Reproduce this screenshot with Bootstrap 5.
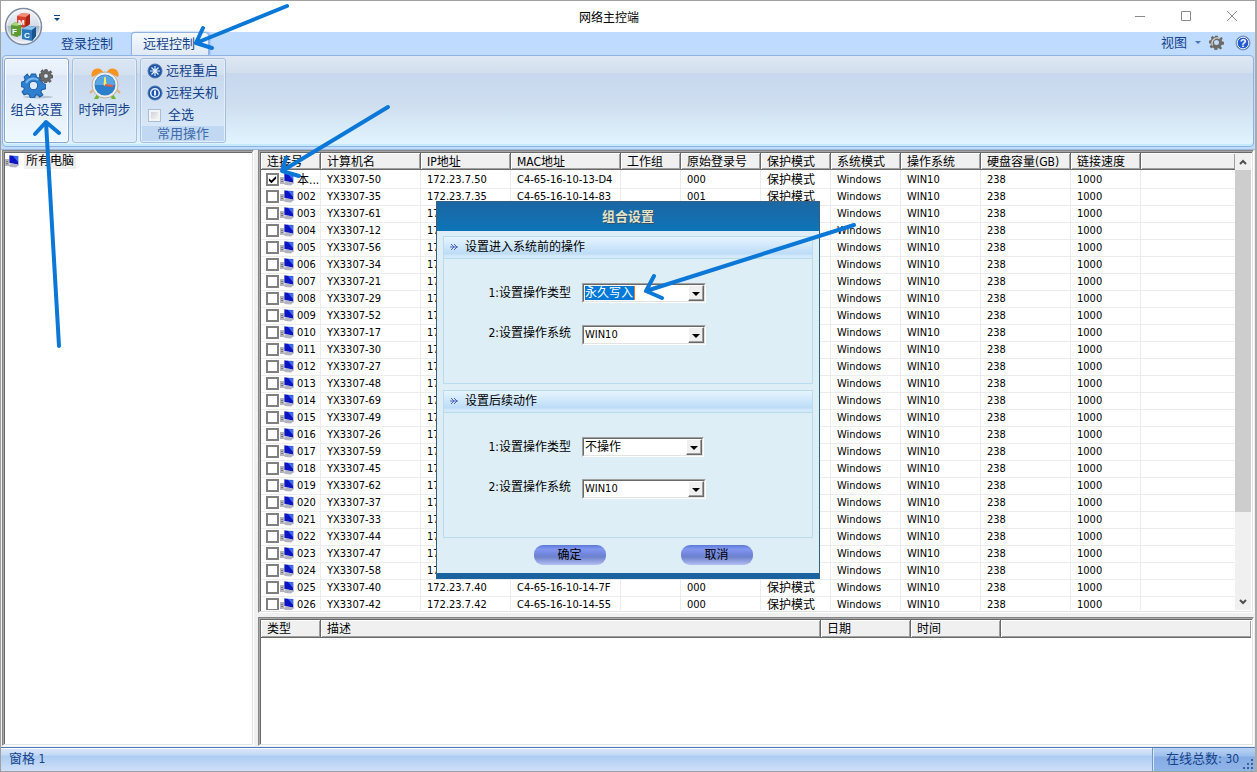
<!DOCTYPE html>
<html lang="zh-CN">
<head>
<meta charset="utf-8">
<meta name="viewport" content="width=device-width, initial-scale=1">
<title>网络主控端</title>
<link href="https://cdn.jsdelivr.net/npm/bootstrap@5.3.0/dist/css/bootstrap.min.css" rel="stylesheet">
<style>
  :root { --ink: #15428b; --face: #f0f0f0; }
  body { font: 12px/16px "DejaVu Sans Condensed", "Noto Sans CJK SC", sans-serif; color: #000; background: #fff; }
  button, input, select { font: inherit; }
  .win { border: 1px solid #a0a0a0; border-right: 2px solid #aaa; }
  .titlebar { height: 31px; }
  .titlebar h1 { font-size: 12px; line-height: 16px; padding-top: 2px; padding-right: 38px; }
  .winctl { gap: 34px; padding-right: 17px; padding-bottom: 1px; }
  .plain { background: none; border: 0; padding: 0; color: inherit; display: flex; align-items: center; }
  .orb { left: 3px; top: 6px; z-index: 3; }
  .qat { left: 52px; top: 13px; }

  .tabs-row { background: #bfdbff; height: 23px; padding-left: 52px; font-size: 13px; color: var(--ink); }
  .tabs-row a { color: var(--ink); text-decoration: none; height: 22px; line-height: 21px; padding: 0 9px 0 8px; }
  .tabs-row a.active { margin-left: 9px; padding: 0 13px 0 11px; height: 23px; background: linear-gradient(#f4f9ff, #dfe9f5); border: 1px solid #8db2e3; border-bottom: 0; border-radius: 4px 4px 0 0; box-shadow: 1px 0 2px #7ea6dc; }
  .tools { padding-right: 4px; gap: 7px; padding-bottom: 2px; }

  .ribbon-bg { background: #bfdbff; padding: 0 1px 2px; }
  .ribbon { height: 92px; border: 1px solid #8db2e3; border-radius: 4px; padding: 2px 1px; gap: 3px; font-size: 13px; color: var(--ink);
    background: linear-gradient(#dfe8f4 0, #d2deec 17px, #c7d7ed 17px, #cfdff0 50px, #e1f4fe 88px); box-shadow: inset 0 -2px 1px #c2eafb; }
  .rgroup { border: 1px solid #a5bfdf; border-radius: 3px; box-shadow: inset 0 0 0 1px #e3eefa; background: linear-gradient(#dbe6f4 0, #d3e0f0 16px, #c8d9ee 16px, #dcecfa 100%); color: var(--ink); padding: 0; height: 85px; }
  .rbig { width: 65px; padding-top: 9px; line-height: 20px; display: flex; flex-direction: column; align-items: center; gap: 0; }
  .rbig.hot { background: linear-gradient(#edf4fd 0, #e6eefa 16px, #dbe7f7 16px, #eef8ff 100%); border-color: #86a7d4; box-shadow: inset 0 0 0 1px #fff; }
  .rlist { width: 86px; padding: 1px; line-height: 20px; }
  .rlist button, .rlist label { height: 22px; padding-left: 5px; gap: 3px; display: flex; align-items: center; }
  .rlist .cap { background: #c0d8f1; color: #3e6aaa; height: 15px; line-height: 15px; text-align: center; }
  .tick-all { appearance: none; width: 13px; height: 13px; margin: 0 4px 0 1px; border: 1px solid #a9bdd8; background: linear-gradient(135deg, #c4c7cc, #fff); box-shadow: inset 0 0 0 2px #f4f4f4; }

  .work { background: var(--face); padding: 0 1px 1px; gap: 4px; border-top: 1px solid #9db8dd; }
  .sunk { background: #fff; border: 1px solid #868686; border-right-color: #fff; border-bottom-color: #fff; padding: 2px; overflow: hidden;
    box-shadow: inset 1px 1px #a6a6a6, inset -1px -1px #e3e3e3, inset 2px 2px #696969; }
  .tree { flex: 0 0 252px; }
  .tree a { color: #000; text-decoration: none; gap: 4px; }
  .tree a span { background: var(--face); padding: 0 2px; }
  .stack { gap: 4px; }
  .log { height: 129px; }

  .grid { table-layout: fixed; width: 100%; border-collapse: separate; border-spacing: 0; }
  .grid th { height: 17px; line-height: 14px; padding: 2px 0 0 6px; font-weight: 400; white-space: nowrap; overflow: hidden; background: var(--face);
    border-right: 1px solid #696969; border-bottom: 1px solid #696969; box-shadow: inset 1px 1px #fff, inset -1px -1px #a0a0a0; }
  .grid th:last-child { border-right: 0; }
  .log .grid th { height: 18px; line-height: 15px; }
  .grid td { height: 17px; line-height: 16px; padding: 0 0 0 5px; font-size: 11px; white-space: nowrap; overflow: hidden; border-right: 1px solid #ececec; border-bottom: 1px solid #ececec; }
  .grid td:nth-child(n+2) { padding-left: 6px; }
  .grid td:last-child { border-right: 0; }
  .grid tbody tr:first-child td { padding-top: 2px; }
  .grid .zh { font-size: 12px; }
  .grid label { display: flex; align-items: center; height: 16px; padding-bottom: 1px; }
  .grid label svg { margin: 0 2px 0 1px; flex: none; }
  .tick { appearance: none; flex: none; width: 13px; height: 13px; margin: 0; border: 2px solid #808080; background: #fff; }
  .tick:checked::before { content: ""; display: block; width: 9px; height: 9px; background: #000; clip-path: polygon(10% 35%, 38% 62%, 90% 12%, 90% 42%, 38% 92%, 10% 65%); }
  .vbar { flex: 0 0 16px; background: var(--face); }
  .vbar i { display: block; background: #cdcdcd; height: 342px; width: 16px; }
  .vbar svg { margin: 4px; flex: none; }

  .statusbar { height: 24px; border-top: 1px solid #4f7cb8; box-shadow: inset 0 1px #fff; background: linear-gradient(#dbe8fa 0, #c3d9f6 7px, #acccf3 8px, #cfe0f8 100%); color: var(--ink); line-height: 21px; }
  .statusbar .zh { font-size: 13px; }
  .statusbar .pane { padding-left: 8px; }
  .statusbar .total { width: 103px; padding: 0 16px 0 13px; border-left: 1px solid #6f97cf; background: linear-gradient(#b9d2f3 0, #9dbfec 8px, #86ade4 9px, #8fb4e8 100%); box-shadow: inset 1px 0 #dbe8fa; }
  .grip { right: 1px; bottom: 1px; }

  .veil { padding-top: 7px; z-index: 5; }
  .dlg { width: 384px; background: #deeef7; border: 1px solid #39617f; border-bottom: 6px solid #1a639e; }
  .dlg h2 { height: 29px; line-height: 30px; margin: 0 0 5px; font-size: 13px; font-weight: 700; text-align: center; color: #e3e3c9; text-shadow: 1px 1px #33506a; background: linear-gradient(#1c67a3, #0d74b8); }
  .dlg fieldset { margin: 0 6px 6px; height: 148px; border: 1px solid #b9dced; }
  .dlg .leg { height: 22px; padding-left: 6px; gap: 7px; background: linear-gradient(#e6f5fe, #bddcf8 80%, #d4eafa 90%); border-bottom: 1px solid #b9dced; margin-bottom: 24px; }
  .frow { padding-left: 36px; gap: 11px; margin-bottom: 22px; }
  .frow label { width: 91px; text-align: right; }
  .combo { display: block; position: relative; width: 124px; height: 20px; border: 1px solid #a0a0a0; border-right-color: #fff; border-bottom-color: #fff; }
  .combo.slim { width: 122px; }
  .combo select { appearance: none; width: 100%; height: 18px; line-height: 15px; padding: 1px 18px 0 1px; border: 1px solid #696969; border-right-color: #e3e3e3; border-bottom-color: #e3e3e3; border-radius: 0; background: #fff; display: block; color: #000; outline: 0; }
  .combo .lat { font-size: 11px; padding-top: 0; }
  .combo select.picked { color: #fff; background: linear-gradient(#e8762c, #e8762c) 50px 1px / 1px 14px no-repeat, linear-gradient(#0078d7, #0078d7) 1px 1px / 49px 14px no-repeat, #fff; }
  .combo::after { content: ""; position: absolute; right: 1px; top: 1px; width: 16px; height: 16px; background: var(--face); border: 1px solid #fff; border-right-color: #696969; border-bottom-color: #696969; box-shadow: inset -1px -1px #a0a0a0; pointer-events: none; }
  .combo::before { content: ""; position: absolute; z-index: 1; right: 5px; top: 8px; border: 4px solid transparent; border-top-color: #000; border-bottom: 0; pointer-events: none; }
  .dlg-foot { gap: 75px; padding: 1px 0 8px 30px; }
  .pill { width: 72px; height: 20px; padding: 0; border: 0; border-radius: 9px; line-height: 20px; background: linear-gradient(#5a78d8 0, #8297ee 4px, #7286dc 9px, #6c82cc 12px, #b5bff2 100%); }
  .pill:hover { filter: brightness(1.05); }
  .notes { z-index: 9; pointer-events: none; fill: none; stroke: #0b78d8; stroke-width: 4; stroke-linecap: round; stroke-linejoin: round; }
</style>
</head>
<body>
<svg class="d-none" aria-hidden="true">
  <symbol id="pc" viewBox="0 0 15 13">
    <path d="M0 4h4v7H0z" fill="#b4b4b8"/><path d="M1 6h2v1H1zM1 8h2v1H1z" fill="#77777c"/>
    <path d="M4 0l10 1v9.500L4 8.500z" fill="#b9bfdc"/><path d="M4.500 .5l8.500 1V9.500L4.500 7.800z" fill="#0c14c4"/>
    <path d="M8 1l5 .6V7z" fill="#3f6cf0"/><path d="M3 10l4-1.500 7 1.500-3 2.500-6-.5z" fill="#b4b4c0"/>
  </symbol>
  <symbol id="cog" viewBox="-12 -12 24 24">
    <path fill-rule="evenodd" d="M-2-11H2L3-8 5-7 8-9 10-6 8-4 9-2 12-1V3L8 4 7 6 9 9 6 11 4 9 2 9 1 12H-3L-4 9-6 8-9 9-11 6-9 4-9 2-12 1V-3L-9-4-8-6-9-8-6-11-4-8-3-9zM0-4a4 4 0 1 0 0 8 4 4 0 0 0 0-8z"/>
  </symbol>
</svg>

<div class="win vh-100 d-flex flex-column position-relative overflow-hidden">
  <header class="titlebar position-relative d-flex align-items-center justify-content-center flex-shrink-0">
    <button class="plain orb position-absolute" aria-label="菜单">
      <svg width="39" height="39" viewBox="0 0 39 39">
        <defs><linearGradient id="gl" x2="0" y2="1"><stop offset="0" stop-color="#f5f7fb"/><stop offset=".48" stop-color="#d5dbe6"/><stop offset=".5" stop-color="#a9b4c8"/><stop offset="1" stop-color="#f2f6fc"/></linearGradient></defs>
        <circle cx="19.500" cy="19.500" r="18" fill="url(#gl)" stroke="#7f8ba1" stroke-width="1.500"/>
        <circle cx="19.500" cy="19.500" r="16.500" fill="none" stroke="#fff" opacity=".7"/>
        <path d="M13 9l5-3 8 1 0 10-5 4-8-2z" fill="#d8402e"/><path d="M13 9l5-3 8 1-4 3z" fill="#f3907c"/><path d="M22 10l4-3v10l-5 4z" fill="#a82318"/>
        <path d="M7 18l4-3 6 2v11l-4 2-6-2z" fill="#5c9a34"/><path d="M7 18l4-3 6 2-4 2z" fill="#a6d37c"/>
        <path d="M18 22l5-3 9 1v9l-4 5-10-2z" fill="#2b78bd"/><path d="M18 22l5-3 9 1-4 3z" fill="#8fc4ec"/><path d="M28 23l4-3v9l-4 5z" fill="#175590"/>
        <g fill="#fff" font-family="Liberation Sans, sans-serif" font-weight="700" font-size="8"><text x="14" y="18">M</text><text x="8" y="27">F</text><text x="20" y="31">C</text></g>
      </svg>
    </button>
    <button class="plain qat position-absolute" aria-label="自定义">
      <svg width="8" height="8"><path d="M1 1.500h6" stroke="#15428b" stroke-width="1"/><path d="M1 4h6L4 7z" fill="#15428b"/></svg>
    </button>
    <h1 class="m-0 fw-normal">网络主控端</h1>
    <div class="winctl position-absolute end-0 top-0 h-100 d-flex align-items-center">
      <button class="plain" aria-label="最小化"><svg width="12" height="12" stroke="#8a8a8a"><path d="M1 6.500h10"/></svg></button>
      <button class="plain" aria-label="最大化"><svg width="12" height="12" fill="none" stroke="#8a8a8a"><path d="M1.500 1.500h9v9h-9z"/></svg></button>
      <button class="plain" aria-label="关闭"><svg width="12" height="12" stroke="#8a8a8a"><path d="M1 1l10 10M11 1L1 11"/></svg></button>
    </div>
  </header>

  <nav class="tabs-row d-flex align-items-end flex-shrink-0">
    <a href="#">登录控制</a>
    <a href="#" class="active">远程控制</a>
    <div class="tools ms-auto d-flex align-items-center align-self-center">
      <button class="plain gap-2">视图 <svg width="7" height="4"><path d="M0 0h6L3 3z" fill="#4a74b4"/></svg></button>
      <button class="plain" aria-label="设置"><svg width="15" height="15" viewBox="0 0 17 17" fill="#6b6b68"><use href="#cog"/><path d="M4 12a6 6 0 0 1 8-8" fill="none" stroke="#d6d3ca" stroke-width="1.500"/></svg></button>
      <button class="plain ms-1" aria-label="帮助"><svg width="16" height="16"><circle cx="8" cy="8" r="7" fill="#2259cf" stroke="#8796b4"/><circle cx="8" cy="8" r="5.800" fill="none" stroke="#e8f0ff"/><text x="8" y="12" text-anchor="middle" font-size="11" font-weight="700" fill="#fff" font-family="Liberation Sans, sans-serif">?</text></svg></button>
    </div>
  </nav>

  <div class="ribbon-bg flex-shrink-0">
    <div class="ribbon d-flex">
      <button class="rgroup rbig hot">
        <svg width="36" height="32" viewBox="0 0 36 32"><ellipse cx="19" cy="29" rx="15" ry="1.500" fill="#b9c4d4"/>
          <svg x="2" y="5" width="25" height="25" fill="#2f7fd0" stroke="#1d5ca5"><use href="#cog"/></svg>
          <path d="M7 15a8 8 0 0 1 12-3" fill="none" stroke="#7db8ee" stroke-width="2"/>
          <svg x="20" y="1" width="14" height="14" fill="#686868" stroke="#444"><use href="#cog"/></svg></svg>
        <span>组合设置</span>
      </button>
      <button class="rgroup rbig">
        <svg width="32" height="32" viewBox="0 0 32 32">
          <path d="M8 26l-3 5 4 0 2-3zM24 26l3 5-4 0-2-3z" fill="#6fb52c"/><path d="M4 22l-3 3M28 22l3 3" stroke="#e2b074" stroke-width="2"/>
          <path d="M3 9a6 6 0 0 1 11-5zM29 9a6 6 0 0 0-11-5z" fill="#f7931e"/>
          <circle cx="16" cy="17" r="13" fill="#f3efe8" stroke="#b9afa0"/><circle cx="16" cy="17" r="10.500" fill="#2c7fcb"/><path d="M6 17a10 10 0 0 1 20 0z" fill="#5aa6e4"/>
          <path d="M16 9l1 8h-2z" fill="#fff35c" stroke="#fff35c"/><path d="M16 17l8 1" stroke="#ef5a3c" stroke-width="2"/></svg>
        <span>时钟同步</span>
      </button>
      <div class="rgroup rlist">
        <button class="plain"><svg width="16" height="16"><circle cx="8" cy="8" r="7" fill="#1f55a8" stroke="#4f74ab"/><path d="M8 3v10M3 8h10M4.500 4.500l7 7M11.500 4.500l-7 7" stroke="#e3f0ff" stroke-width="1.200"/></svg>远程重启</button>
        <button class="plain"><svg width="16" height="16"><circle cx="8" cy="8" r="7" fill="#1f55a8" stroke="#4f74ab"/><circle cx="8" cy="8" r="4.300" fill="none" stroke="#e3f0ff" stroke-width="1.500"/><path d="M8 5.500v5" stroke="#fff" stroke-width="1.800"/></svg>远程关机</button>
        <label><input type="checkbox" class="tick-all">全选</label>
        <div class="cap">常用操作</div>
      </div>
    </div>
  </div>

  <main class="work d-flex flex-grow-1 overflow-hidden">
    <aside class="tree sunk">
      <a href="#" class="d-flex align-items-center"><svg width="15" height="13"><use href="#pc"/></svg><span>所有电脑</span></a>
    </aside>
    <div class="stack d-flex flex-column flex-grow-1 overflow-hidden">
      <section class="sunk d-flex flex-grow-1">
        <div class="flex-grow-1 overflow-hidden">
          <table class="grid">
            <colgroup><col width="60"><col width="100"><col width="90"><col width="110"><col width="60"><col width="80"><col width="70"><col width="70"><col width="80"><col width="90"><col width="70"><col></colgroup>
            <thead><tr><th>连接号</th><th>计算机名</th><th>IP地址</th><th>MAC地址</th><th>工作组</th><th>原始登录号</th><th>保护模式</th><th>系统模式</th><th>操作系统</th><th>硬盘容量(GB)</th><th>链接速度</th><th></th></tr></thead>
            <tbody id="hosts"></tbody>
          </table>
        </div>
        <div class="vbar d-flex flex-column">
          <svg width="8" height="9" fill="none" stroke="#505050" stroke-width="2"><path d="M1 7l3-3 3 3"/></svg>
          <i></i>
          <svg class="mt-auto" width="8" height="9" fill="none" stroke="#505050" stroke-width="2"><path d="M1 3l3 3 3-3"/></svg>
        </div>
      </section>
      <section class="sunk log flex-shrink-0">
        <table class="grid">
          <colgroup><col width="60"><col width="500"><col width="90"><col width="90"><col></colgroup>
          <thead><tr><th>类型</th><th>描述</th><th>日期</th><th>时间</th><th></th></tr></thead>
        </table>
      </section>
    </div>
  </main>

  <footer class="statusbar d-flex position-relative flex-shrink-0">
    <div class="pane flex-grow-1"><span class="zh">窗格</span> 1</div>
    <div class="total text-nowrap"><span class="zh">在线总数:</span> 30</div>
    <svg class="grip position-absolute" width="11" height="11" fill="#3c5f96"><path d="M8 0h2v2H8zM4 4h2v2H4zM8 4h2v2H8zM0 8h2v2H0zM4 8h2v2H4zM8 8h2v2H8z"/></svg>
  </footer>

  <div class="veil position-absolute top-0 start-0 w-100 h-100 d-flex align-items-center justify-content-center">
    <form class="dlg" role="dialog" aria-labelledby="dt">
      <h2 id="dt">组合设置</h2>
      <fieldset>
        <div class="leg d-flex align-items-center"><svg width="8" height="8" fill="none" stroke="#4a63b8"><path d="M1 1l3 3-3 3M4 1l3 3-3 3M0 4h8"/></svg>设置进入系统前的操作</div>
        <div class="frow d-flex align-items-center"><label for="a1">1:设置操作类型</label><span class="combo"><select id="a1" class="picked"><option>永久写入</option></select></span></div>
        <div class="frow d-flex align-items-start"><label for="a2">2:设置操作系统</label><span class="combo"><select id="a2" class="lat"><option>WIN10</option></select></span></div>
      </fieldset>
      <fieldset>
        <div class="leg d-flex align-items-center"><svg width="8" height="8" fill="none" stroke="#4a63b8"><path d="M1 1l3 3-3 3M4 1l3 3-3 3M0 4h8"/></svg>设置后续动作</div>
        <div class="frow d-flex align-items-center"><label for="b1">1:设置操作类型</label><span class="combo slim"><select id="b1"><option>不操作</option></select></span></div>
        <div class="frow d-flex align-items-start"><label for="b2">2:设置操作系统</label><span class="combo"><select id="b2" class="lat"><option>WIN10</option></select></span></div>
      </fieldset>
      <div class="dlg-foot d-flex justify-content-center">
        <button type="button" class="pill">确定</button>
        <button type="button" class="pill">取消</button>
      </div>
    </form>
  </div>

  <svg class="notes position-absolute top-0 start-0 w-100 h-100" aria-hidden="true">
    <path d="M286 5L195 42M202 27L195 42 211 47"/>
    <path d="M387 106L281 170M285 157L281 170 298 175"/>
    <path d="M58 345L45 121M34 133L45 121 58 132"/>
    <path d="M853 224L645 290M653 275L645 290 661 297"/>
  </svg>
</div>

<script>
  // machine number per seat; the last octet of the address is the same number
  const seats = [50,35,61,12,56,34,21,29,52,17,30,27,48,69,49,26,59,45,62,37,33,44,47,58,40,42];
  const known = {0: ['C4-65-16-10-13-D4','000'], 1: ['C4-65-16-10-14-83','001'], 24: ['C4-65-16-10-14-7F','000'], 25: ['C4-65-16-10-14-55','000']};
  document.getElementById('hosts').innerHTML = seats.map((n, i) => {
    const [mac, login] = known[i] || ['', ''];
    const no = i ? String(i + 1).padStart(3, '0') : '<span class="zh">本...</span>';
    return `<tr><td><label><input type="checkbox" class="tick"${i ? '' : ' checked'}><svg width="15" height="13"><use href="#pc"/></svg>${no}</label></td>
      <td>YX3307-${n}</td><td>172.23.7.${n}</td><td>${mac}</td><td></td><td>${login}</td><td class="zh">${known[i] ? '保护模式' : ''}</td>
      <td>Windows</td><td>WIN10</td><td>238</td><td>1000</td><td></td></tr>`;
  }).join('');
</script>
<script src="https://cdn.jsdelivr.net/npm/bootstrap@5.3.0/dist/js/bootstrap.bundle.min.js"></script>
</body>
</html>
